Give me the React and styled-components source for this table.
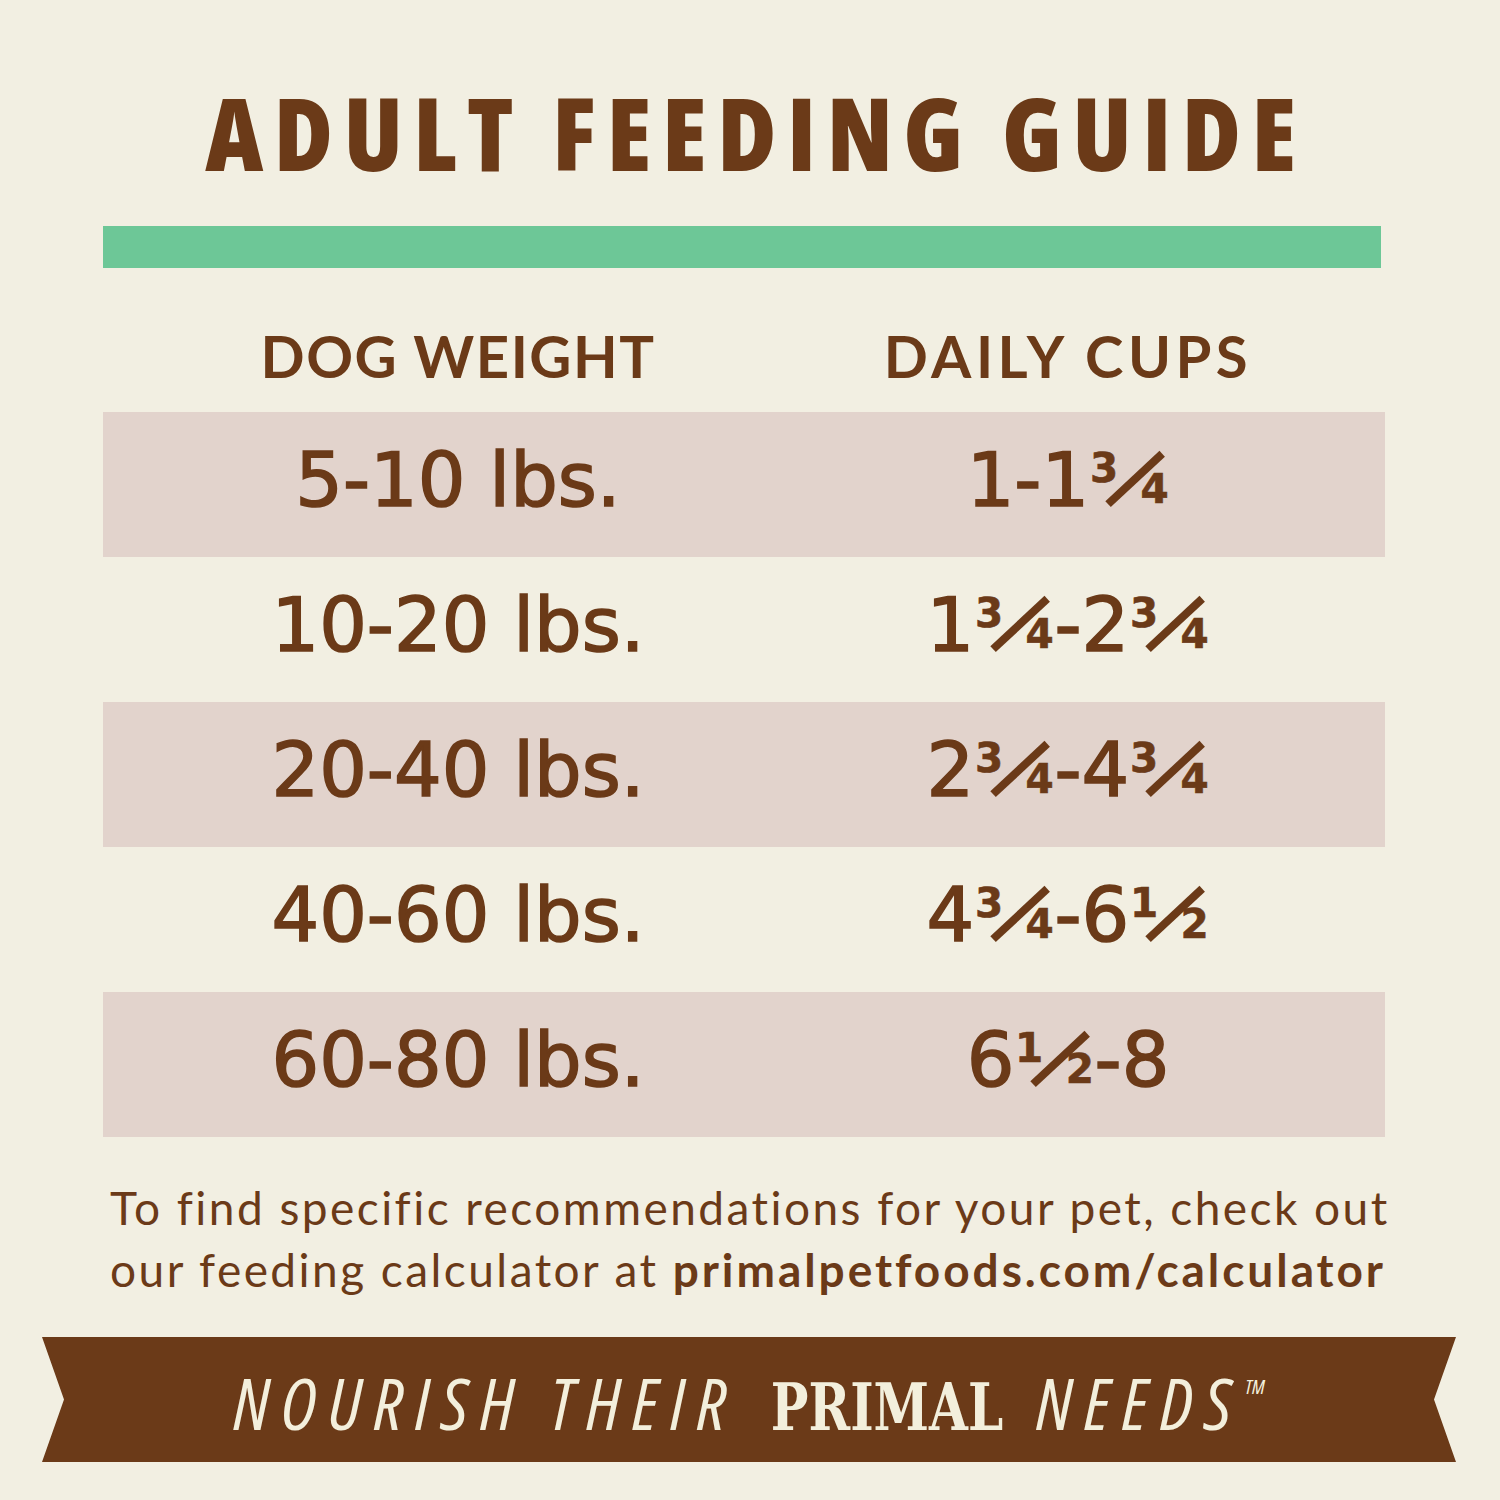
import React from "react";
import styled, { createGlobalStyle } from "styled-components";

const GlobalStyle = createGlobalStyle`
  html, body {
    margin: 0;
    padding: 0;
    background: #f2efe2;
  }
`;

// cups are split into whole part + fraction so the fraction can be drawn large like the print
const rows = [
  { weight: "5-10 lbs.", cups: ["1-1", "3/4"], shaded: true },
  { weight: "10-20 lbs.", cups: ["1", "3/4", "-2", "3/4"], shaded: false },
  { weight: "20-40 lbs.", cups: ["2", "3/4", "-4", "3/4"], shaded: true },
  { weight: "40-60 lbs.", cups: ["4", "3/4", "-6", "1/2"], shaded: false },
  { weight: "60-80 lbs.", cups: ["6", "1/2", "-8"], shaded: true },
];

const Fraction = ({ value }) => {
  const [num, den] = value.split("/");
  return (
    <Frac>
      <Num>{num}</Num>
      <Slash />
      <Den>{den}</Den>
    </Frac>
  );
};

const App = () => {
  return (
    <>
      <GlobalStyle />
      <Page>
        <Title>ADULT FEEDING GUIDE</Title>
        <GreenBar />
        <Table>
          <HeadRow>
            <HeadCell $spacing={1.5}>DOG WEIGHT</HeadCell>
            <HeadCell $spacing={4.5}>DAILY CUPS</HeadCell>
          </HeadRow>
          {rows.map((row) => (
            <Row key={row.weight} $shaded={row.shaded}>
              <Cell>{row.weight}</Cell>
              <Cell>
                {row.cups.map((part, i) =>
                  part.includes("/") ? (
                    <Fraction key={i} value={part} />
                  ) : (
                    <span key={i}>{part}</span>
                  )
                )}
              </Cell>
            </Row>
          ))}
        </Table>
        <Note>
          To find specific recommendations for your pet, check out
          <br />
          our feeding calculator at <b>primalpetfoods.com/calculator</b>
        </Note>
        <Banner>
          <Slogan>
            <Italic>NOURISH THEIR</Italic>
            <Primal>PRIMAL</Primal>
            <Italic>
              NEEDS<Tm>TM</Tm>
            </Italic>
          </Slogan>
        </Banner>
      </Page>
    </>
  );
};

export default App;

const Page = styled.div`
  width: 1500px;
  height: 1500px;
  box-sizing: border-box;
  padding: 75px 16px 0 0;
  background: #f2efe2;
  color: #6b3a18;
  display: flex;
  flex-direction: column;
  align-items: center;
`;

const Title = styled.h1`
  margin: 0 0 0 28px;
  font-family: "Open Sans", "DejaVu Sans", sans-serif;
  font-stretch: 75%;
  font-weight: 800;
  font-size: 101px;
  line-height: 115px;
  letter-spacing: 10.5px;
  white-space: nowrap;
  color: #6b3a18;
`;

const GreenBar = styled.div`
  width: 1278px;
  height: 42px;
  background: #6dc797;
  margin-top: 36px;
`;

const Table = styled.div`
  width: 1282px;
  margin-top: 53px;
  margin-left: 4px;
  display: flex;
  flex-direction: column;
`;

const HeadRow = styled.div`
  display: grid;
  grid-template-columns: 1fr 1fr;
  padding: 0 12px 0 50px;
  height: 91px;
  align-items: start;
`;

const HeadCell = styled.div`
  text-align: center;
  font-family: Lato, "Noto Sans", sans-serif;
  font-weight: 700;
  font-size: 58px;
  line-height: 70px;
  letter-spacing: ${(p) => p.$spacing}px;
  white-space: nowrap;
`;

const Row = styled.div`
  display: grid;
  grid-template-columns: 1fr 1fr;
  box-sizing: border-box;
  padding: 0 12px 8px 50px;
  height: 145px;
  align-items: center;
  background: ${(p) => (p.$shaded ? "#e2d3cc" : "transparent")};
`;

const Cell = styled.div`
  text-align: center;
  font-family: "DejaVu Sans", Lato, sans-serif;
  font-weight: 400;
  font-size: 75px;
  line-height: 1;
  -webkit-text-stroke: 1.6px #6b3a18;
  white-space: nowrap;
`;

const Frac = styled.span`
  display: inline-block;
  position: relative;
  width: 1.05em;
  height: 0.73em;
  margin: 0 0.01em;
`;

const Num = styled.span`
  position: absolute;
  left: 0;
  top: -0.07em;
  font-size: 0.54em;
  font-weight: 700;
  line-height: 1;
  -webkit-text-stroke: 0.6px #6b3a18;
`;

const Den = styled.span`
  position: absolute;
  right: 0;
  bottom: -0.085em;
  font-size: 0.54em;
  font-weight: 700;
  line-height: 1;
  -webkit-text-stroke: 0.6px #6b3a18;
`;

const Slash = styled.span`
  position: absolute;
  left: 0.55em;
  top: -0.13em;
  width: 0.11em;
  height: 0.99em;
  background: #6b3a18;
  transform: rotate(47deg);
`;

const Note = styled.p`
  margin: 40px 0 0 0;
  width: 1264px;
  font-family: Lato, "Noto Sans", sans-serif;
  font-weight: 400;
  font-size: 46px;
  line-height: 62px;
  letter-spacing: 2.45px;
  white-space: nowrap;
  color: #6b3a18;

  b {
    font-weight: 700;
    letter-spacing: 2.95px;
  }
`;

const Banner = styled.div`
  width: 1414px;
  height: 125px;
  margin-top: 36px;
  margin-left: 14px;
  background: #6b3a18;
  clip-path: polygon(0 0, 100% 0, 1392px 50%, 100% 100%, 0 100%, 22px 50%);
  display: flex;
  align-items: center;
  justify-content: center;
`;

const Slogan = styled.div`
  display: flex;
  align-items: baseline;
  gap: 32px;
  color: #f3efdc;
  white-space: nowrap;
  margin-top: 4px;
`;

const Italic = styled.span`
  font-family: "Open Sans", "DejaVu Sans", sans-serif;
  font-stretch: 75%;
  font-style: italic;
  font-weight: 500;
  font-size: 72px;
  letter-spacing: 11.7px;
`;

const Primal = styled.span`
  display: inline-block;
  font-family: "DejaVu Serif", "Liberation Serif", serif;
  font-weight: 700;
  font-size: 66px;
  letter-spacing: 0;
  transform: scaleX(0.76);
  margin: 0 -36px;
`;

const Tm = styled.sup`
  font-size: 20px;
  letter-spacing: 0;
  vertical-align: 36px;
  margin-left: 2px;
`;
